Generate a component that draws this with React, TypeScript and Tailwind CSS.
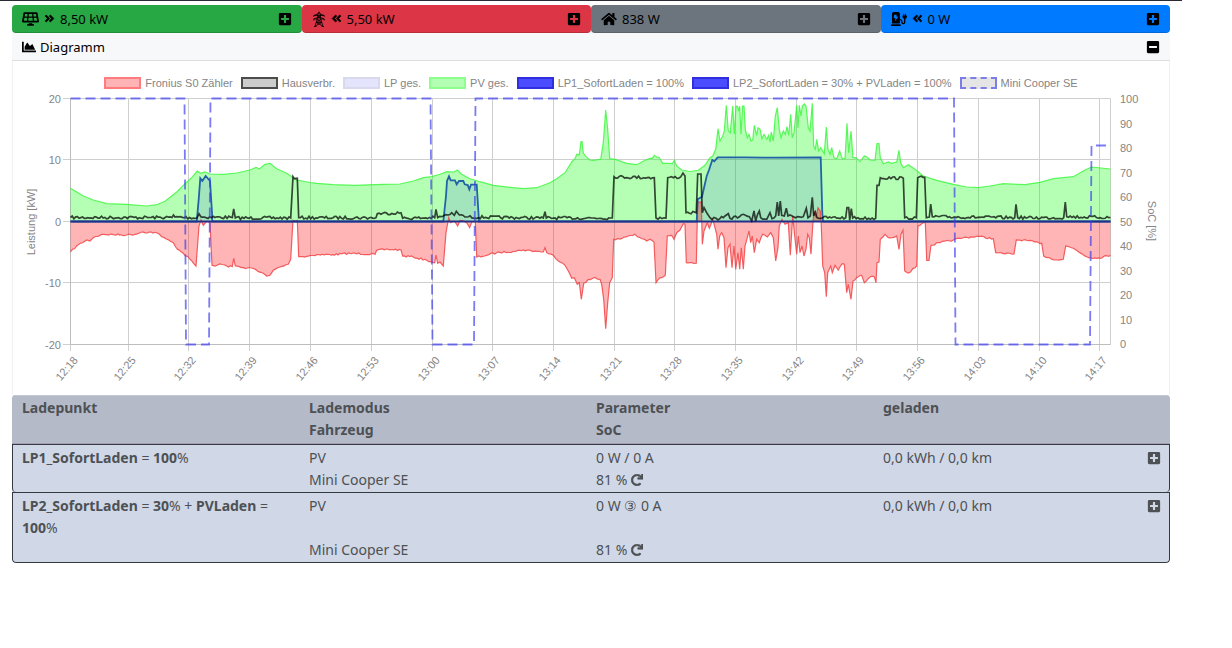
import type { ReactNode } from "react";
import {
  FaAngleDoubleLeft,
  FaAngleDoubleRight,
  FaChargingStation,
  FaChartArea,
  FaHome,
  FaMinusSquare,
  FaPlusSquare,
  FaRedo,
  FaSolarPanel,
} from "react-icons/fa";

type Point = [number, number];

const ZERO = 221.5;

const timeTicks: [number, string][] = [
  [70.5, "12:18"], [128.5, "12:25"], [188.5, "12:32"], [249.5, "12:39"], [310.5, "12:46"], [371.5, "12:53"],
  [432.5, "13:00"], [492.5, "13:07"], [553.5, "13:14"], [614.5, "13:21"], [674.5, "13:28"], [735.5, "13:35"],
  [796.5, "13:42"], [856.5, "13:49"], [917.5, "13:56"], [978.5, "14:03"], [1039.5, "14:10"], [1099.5, "14:17"],
];

const powerTicks: [number, string][] = [
  [98.5, "20"], [159.5, "10"], [221.5, "0"], [282.5, "-10"], [344.5, "-20"],
];

const socTicks = [100, 90, 80, 70, 60, 50, 40, 30, 20, 10, 0];

const pv: Point[] = [
  [70.5, 188.3], [83.3, 196], [93.3, 200], [106.7, 203.7], [126.7, 204.3], [146.7, 206], [156.7, 204.7], [165, 201.3],
  [176.7, 192], [185, 183.7], [191.7, 177.7], [197.3, 171], [200.7, 173.3], [205, 172], [210, 174], [223.3, 174.3],
  [236.7, 173], [250, 170], [256, 167.3], [259.3, 169], [265, 164.3], [270, 163.3], [276.7, 168.7], [286.7, 173.3],
  [296.7, 180], [310, 182.5], [316.7, 183.3], [333.3, 184.7], [355, 185.3], [383.3, 184.3], [400, 184], [413.3, 181],
  [423.3, 177.7], [431.7, 176.7], [440, 174.3], [446.7, 171.7], [454, 172], [457.3, 170], [461.7, 174.3], [470, 178.7],
  [480, 181.7], [493.3, 185.3], [510, 187.3], [523.3, 188.7], [536.7, 187.7], [550, 182.7], [556.7, 178.7], [565, 172.7],
  [571.7, 162], [575, 158.7], [576.7, 154.3], [579.3, 154.7], [581, 141.7], [582, 141.7], [583.3, 153], [586, 156.7],
  [590, 160], [593, 160.3], [600.7, 159.3], [603.3, 142.7], [605.7, 110], [607.7, 129.3], [609.7, 158.7], [615, 159.3],
  [626.7, 163.3], [636.7, 164.7], [645, 160.3], [650, 158.3], [652.3, 158.3], [654.3, 155.3], [656.7, 157], [659, 157.3],
  [662.7, 163.3], [668.3, 163.3], [672.3, 163.7], [674.3, 160.3], [676.7, 166], [681.7, 170], [690, 171.5], [698.3, 170.3],
  [705, 165.3], [710, 157.7], [712.7, 156], [715.7, 149.3], [718, 128.7], [720, 141], [722.7, 136], [724.3, 131],
  [726.3, 105.3], [728.3, 131], [730.3, 132.7], [732.7, 106], [734.3, 134.3], [736, 106], [737.5, 106.5], [738.7, 111],
  [739.7, 106], [741, 134.3], [742.6, 106], [744, 106], [745.3, 129.3], [747.3, 137.7], [749, 134.3], [751, 141],
  [752.7, 140], [754.3, 125.3], [756.7, 135.3], [758, 127.7], [760, 129], [762, 138.7], [764, 134.3], [766.7, 139.3],
  [768.7, 135.3], [770, 142], [771.3, 132], [773.3, 141], [775.3, 116], [777.3, 107.7], [779.3, 129.3], [781, 137.7],
  [783.3, 131], [785.3, 134.3], [787, 126.7], [788.7, 135.3], [790.7, 114.3], [792.3, 137.7], [794, 132.7],
  [796.7, 105.3], [798, 127.7], [799.3, 105.3], [801, 116], [802.3, 106], [804.3, 104], [806, 106], [808.3, 127.7],
  [810, 131], [812.3, 103.3], [813.7, 146], [815.3, 149.3], [816.7, 139.3], [818.7, 151], [820.7, 147.7], [824.3, 153.7],
  [826.3, 127], [828, 149.3], [830, 154.3], [831.7, 147.7], [834, 157.7], [836.7, 158.7], [839.7, 151], [842.3, 158.7],
  [845, 158.7], [847, 123.3], [848.7, 152.7], [851, 131], [853, 157.7], [856, 157.7], [860, 161.7], [864.3, 156],
  [866.7, 156.7], [870, 160], [875, 160.3], [877, 143.7], [879, 143.7], [880.3, 157.7], [883.3, 163.7], [888.3, 162],
  [891.7, 163.3], [896.7, 162], [899, 150.3], [900.7, 162.7], [903.3, 167.7], [908.3, 164.7], [915, 169.3],
  [923.3, 176], [936.7, 180.3], [953.3, 184.3], [966.7, 187], [978.3, 187.7], [990, 186], [1003.3, 183.7],
  [1025, 184.7], [1040, 182.3], [1053.3, 178.7], [1073.3, 176.7], [1085, 170], [1091.7, 167], [1110.5, 169],
];

const grid: Point[] = [
  [70.5, 252], [76.7, 246], [86.7, 240], [90, 241], [93.3, 237.7], [101.7, 234.3], [126.7, 235], [135, 234.3],
  [141.7, 232], [156.7, 232.7], [161.7, 236.7], [170, 241], [173.3, 242.7], [175.7, 247], [183.3, 253.3], [190, 259.3],
  [196, 266], [199, 226], [201, 220], [203.3, 225.3], [206.7, 221.3], [210, 222.7], [212, 265.3], [215, 266], [220, 264],
  [226.7, 266], [232.3, 266.7], [233.7, 258.3], [235.3, 266], [243.3, 267.7], [253.3, 268.3], [258.3, 271.7],
  [263.3, 273.3], [266.7, 276], [270, 275.3], [273.3, 270.3], [280, 267], [288.3, 264.3], [290.7, 259.3], [293, 220.3],
  [297.3, 220.3], [298.7, 256.7], [303, 256.7], [316.7, 254.7], [333, 254.7], [350, 253.3], [375, 254.3], [376.7, 250.3],
  [388.3, 249.3], [401, 250], [402.7, 256], [413.3, 257], [426.7, 260.3], [434.7, 262.7], [436, 255], [437.7, 263.3],
  [440, 262], [443.3, 266], [446, 232.7], [448.7, 217.7], [450.7, 222.7], [454, 221], [457.7, 226], [460, 220.3],
  [466.7, 222.7], [469.7, 227.7], [471.7, 222], [475.3, 221.3], [476.7, 257], [486.7, 255.3], [496.7, 252.7],
  [513.3, 251.3], [523.3, 250], [536.7, 251.3], [543.3, 252], [545, 247.7], [546.7, 252.7], [553.3, 255.3],
  [558.3, 261], [565, 265.3], [568.3, 271], [571.7, 278.3], [574.3, 277.7], [577.3, 284.3], [579.3, 282.7],
  [581.3, 299.3], [583.7, 283.3], [588.3, 279.3], [595, 277.5], [600, 279.3], [601.7, 284.3], [603.7, 299.3],
  [605.7, 328.7], [607.7, 302.7], [609.7, 282.7], [612.3, 277.7], [613.7, 239.3], [621.7, 238.7], [628.3, 236],
  [635, 234.3], [640, 237.7], [646.7, 241], [650, 239.3], [654, 242], [656, 282.7], [658.3, 279.3], [661.7, 277.7],
  [665.3, 275.3], [667.3, 236], [671.7, 235.3], [674, 239.3], [676.7, 232.7], [680, 230], [683.3, 223.7], [685, 224.3],
  [686.3, 262.7], [691.7, 262.7], [696.3, 263.3], [697.7, 202.7], [701.3, 202], [702.3, 244.3], [704, 231],
  [707.3, 222.7], [709.3, 228.3], [712.7, 219.3], [715, 227.7], [716.7, 234.3], [718, 249.3], [719.7, 236],
  [721.7, 232.7], [724, 237.7], [726, 267.7], [728, 247.7], [730, 244.3], [732, 267.7], [734, 246], [735.7, 269.3],
  [738, 252.7], [739.7, 269.3], [741.3, 247.7], [743.3, 269.3], [745, 246], [747.3, 237.7], [749, 231], [750.7, 242.7],
  [752.3, 236], [754.3, 252.7], [756.7, 239.3], [759.3, 242.7], [762.7, 234.3], [767.3, 237], [770.7, 232.7],
  [773.3, 237.7], [775.7, 261], [778, 247.7], [779.3, 226], [782, 219.3], [785, 224.3], [788.3, 222.7], [790.3, 255.3],
  [792.7, 216], [794.7, 236], [796.7, 254.3], [798.3, 236], [800, 252.7], [802, 246], [804, 256], [806, 249.3],
  [807.7, 234.3], [809.3, 237.7], [811, 254.3], [812.7, 226], [814, 211], [816, 217.7], [818, 207.7], [820.3, 211],
  [821.3, 226], [822.7, 266], [824.7, 272.7], [826.3, 296.7], [827.7, 272.7], [830.7, 266], [832.3, 272.7], [835, 265.3],
  [838.3, 270], [842.3, 263.7], [844.3, 264.3], [846.7, 292.7], [848.3, 284.3], [851, 299.3], [853, 281],
  [858.3, 276.7], [861.7, 275.3], [864.3, 282.7], [870, 277], [874.3, 276.7], [876, 282.7], [877, 262.7], [879, 262],
  [880.3, 239.3], [885, 234.3], [888.3, 237.7], [896.7, 236], [899, 249.3], [901, 234.3], [903, 230.3], [904.7, 271],
  [908.3, 273], [915, 267.7], [916.7, 266], [918, 226], [923.3, 222.7], [925.3, 222.7], [926.7, 260.3], [929, 260.3],
  [931, 245.3], [940, 242.7], [953.3, 240], [963.3, 237.7], [978.3, 236.3], [993.3, 238.7], [995.7, 252.7],
  [1003.3, 253.7], [1014, 254], [1016.3, 240], [1023.3, 240], [1041.7, 243.3], [1043.7, 256], [1056.7, 260],
  [1063.3, 259.3], [1065.7, 246], [1073.3, 248.3], [1086.7, 256.7], [1096.7, 258.3], [1110.5, 255.3],
];

const house: Point[] = [
  [70.5, 217.5], [172, 217.5], [173.5, 215], [175, 217], [197, 218], [199, 213.7], [201, 217], [232.3, 217.5],
  [233.7, 209], [235.3, 218], [290.7, 218], [293, 176.7], [294.3, 178.7], [297.3, 178.3], [298.7, 217.7], [376, 217.7],
  [377.3, 213.7], [401, 212.7], [402.7, 218.3], [434.7, 217.7], [436, 209.3], [437.7, 217.7], [443.3, 216], [448, 215],
  [451.7, 212.7], [454.3, 215.3], [456.3, 211.3], [459.3, 215], [466.7, 217], [543.3, 218], [545, 211.7], [546.3, 218],
  [612.3, 218], [614, 176.7], [654.3, 177.7], [656, 218], [666, 218], [667.7, 177.7], [680.7, 177], [683, 173],
  [685, 176], [686, 212.7], [696.3, 212.7], [697.7, 174], [701, 174], [702.3, 212.7], [704, 207.7], [706.7, 212.7],
  [710, 217.7], [718, 220], [725, 216], [728.3, 213.7], [730, 218.3], [745, 215], [749.3, 216.7], [751.7, 221],
  [754, 211], [755.7, 221], [759.3, 211], [760.7, 217.7], [766.7, 219.3], [770, 212.7], [772, 218.7], [775.7, 216],
  [777.3, 202], [778.7, 216], [780.3, 201], [781.7, 215.3], [784.3, 216], [786.3, 208.3], [788, 216], [803.3, 216.7],
  [806.3, 208.3], [808, 217.7], [810.3, 216], [812.3, 197.3], [813.7, 216], [815.3, 212], [817, 217.7], [845.7, 217.7],
  [847, 207.7], [848.7, 207.7], [849.7, 220.3], [851.3, 208.7], [852.7, 218], [875.7, 218.3], [877, 185.3],
  [879, 185.3], [880.3, 177.7], [903.3, 178.3], [904.7, 217.7], [916.3, 217.7], [917.7, 177.7], [924.7, 177.3],
  [926.3, 217.7], [929.3, 217], [930.7, 204], [932.3, 216.7], [1014.7, 217.7], [1016, 204.3], [1017.7, 217.7],
  [1063.7, 217.7], [1065.3, 202], [1066.7, 216.7], [1110.5, 217.5],
];

const charging: Point[] = [
  [70.5, ZERO], [196.7, ZERO], [198.7, 199.3], [200.3, 178.3], [202.3, 181], [205.7, 176], [210, 181], [212, 212.7],
  [212.3, ZERO], [443.3, ZERO], [446, 196], [447, 181], [449, 176.3], [450.7, 180.3], [455, 180.3], [456.7, 184.3],
  [459, 181], [463.3, 181], [464.7, 184.3], [467.7, 185], [469.3, 189.3], [471, 184.7], [476.7, 184.7], [479, ZERO],
  [696.7, ZERO], [697.7, 199.3], [702, 196.7], [706.7, 176], [709, 170], [712.3, 160], [714.3, 161.3], [717.7, 157.3],
  [745, 157.3], [773.3, 157.7], [820.7, 157.3], [822.3, 212.7], [823, ZERO], [1110.5, ZERO],
];

const soc: Point[] = [
  [70.5, 98.5], [184.5, 98.5], [186, 344.5], [209, 344.5], [210.5, 98.5], [430.5, 98.5], [432.5, 344.5], [474, 344.5],
  [475.5, 98.5], [954, 98.5], [955.5, 344.5], [1090, 344.5], [1091.5, 145.5], [1110.5, 145.5],
];

// Meter jitter: long flat stretches get small steps, steep edges stay clean.
function jitter(points: Point[], amp: number): Point[] {
  const out: Point[] = [points[0]];
  let seed = 7;
  for (let i = 1; i < points.length; i++) {
    const [x0, y0] = points[i - 1];
    const [x1, y1] = points[i];
    const steps = Math.floor((x1 - x0) / 1.7);
    for (let s = 1; s < steps; s++) {
      seed = (seed * 16807) % 2147483647;
      const noise = (seed / 2147483647 - 0.5) * 2 * amp;
      out.push([x0 + ((x1 - x0) * s) / steps, y0 + ((y1 - y0) * s) / steps + noise]);
    }
    out.push([x1, y1]);
  }
  return out;
}

function line(points: Point[]) {
  return "M" + points.map(([x, y]) => `${x.toFixed(1)} ${y.toFixed(1)}`).join("L");
}

function area(points: Point[]) {
  return `${line(points)}L1110.5 ${ZERO}L70.5 ${ZERO}Z`;
}

const gridNoisy = jitter(grid, 0.9);
const houseNoisy = jitter(house, 1.5);

const legend = [
  { label: "Fronius S0 Zähler", box: "border-[#ff7b7d] bg-[#ffb3b4]" },
  { label: "Hausverbr.", box: "border-[#4c4c4c] bg-[#cccccc]" },
  { label: "LP ges.", box: "border-[#d9d9ee] bg-[#e4e4fd]" },
  { label: "PV ges.", box: "border-[#8dff8d] bg-[#b3ffb3]" },
  { label: "LP1_SofortLaden = 100%", box: "border-[#2f2fe0] bg-[#4c4cff]" },
  { label: "LP2_SofortLaden = 30% + PVLaden = 100%", box: "border-[#2f2fe0] bg-[#4c4cff]" },
  { label: "Mini Cooper SE", box: "border-dashed border-[#7d7de8] bg-[#e5e5e5]" },
];

function Chart() {
  return (
    <div className="border-x border-[#f1f1f4] bg-white pt-4">
      <ul className="flex flex-wrap justify-center gap-x-2 pb-[3px] font-['Liberation_Sans',Arial,sans-serif] text-[11px] leading-3 text-[#858585]">
        {legend.map((item) => (
          <li key={item.label} className="flex items-center gap-1">
            <span className={`h-3 w-[37px] border-2 ${item.box}`} />
            {item.label}
          </li>
        ))}
      </ul>
      <svg
        viewBox="13 92 1156 303"
        className="block h-auto w-full font-['Liberation_Sans',Arial,sans-serif] text-[11px]"
        role="img"
        aria-label="Leistung und SoC"
      >
        <g stroke="#cfcfcf" fill="none">
          {powerTicks.map(([y, label]) => (
            <path key={label} d={`M63 ${y}H1110.5`} />
          ))}
          {timeTicks.map(([x, label]) => (
            <path key={label} d={`M${x} 98.5V351`} />
          ))}
          <path d="M1110.5 98.5V344.5" />
        </g>
        <path d="M70.5 98.5V344.5H1110.5" stroke="#bdbdbd" fill="none" />

        <path d={area(pv)} fill="#0aff0a" fillOpacity="0.3" />
        <path d={line(pv)} fill="none" stroke="#2cf52c" strokeOpacity="0.75" strokeWidth="1.2" />
        <path d={area(charging)} fill="#0000ff" fillOpacity="0.1" />
        <path d={area(gridNoisy)} fill="#ff0a0d" fillOpacity="0.3" />
        <path d={line(gridNoisy)} fill="none" stroke="#f03c3e" strokeOpacity="0.8" strokeWidth="1.2" />
        <path d={line(charging)} fill="none" stroke="#2364a6" strokeWidth="1.8" />
        <path d={`M70.5 ${ZERO}H1110.5`} stroke="#22308c" strokeWidth="2" />
        <path d={line(houseNoisy)} fill="none" stroke="#000" strokeOpacity="0.72" strokeWidth="1.7" />
        <path d={line(soc)} fill="none" stroke="#3c3cf0" strokeOpacity="0.68" strokeWidth="1.8" strokeDasharray="10 5" />

        <g fill="#858585">
          {powerTicks.map(([y, label]) => (
            <text key={label} x="61" y={y + 4} textAnchor="end">{label}</text>
          ))}
          {socTicks.map((value) => (
            <text key={value} x="1120" y={348 - value * 2.45}>{value}</text>
          ))}
          {timeTicks.map(([x, label]) => (
            <text key={label} transform={`translate(${x - 1} 371) rotate(-50)`} textAnchor="middle">{label}</text>
          ))}
          <text transform="translate(35 222) rotate(-90)" textAnchor="middle">Leistung [kW]</text>
          <text transform="translate(1148 221) rotate(90)" textAnchor="middle">SoC [%]</text>
        </g>
      </svg>
    </div>
  );
}

function PylonIcon() {
  return (
    <svg viewBox="0 0 14 16" className="h-4 w-3.5" fill="none" stroke="currentColor" strokeWidth="0.8" aria-hidden="true">
      <path d="M5.500 3.500 7 .8 8.500 3.500V7L11 15.500M5.500 3.500V7L3 15.500M1.800 5.800V4.500L5.500 3H8.500L12.200 4.500V5.800M1.800 9.500V8L5.500 6.500H8.500L12.200 8V9.500M1.800 4.500H12.200M1.800 8H12.200M5.500 4.500 8.500 7M8.500 4.500 5.500 7M5 8.500 9.800 11.500M9 8.500 4.200 11.500M4.200 11.500H9.800M4.200 11.500 10.800 15M9.800 11.500 3.200 15M2 15.500H4.500M9.500 15.500H12" />
    </svg>
  );
}

function StatusTile({ color, label, children }: { color: string; label: string; children: ReactNode }) {
  return (
    <div className={`flex h-7 items-center justify-between rounded border-b border-black/15 px-2.5 ${color}`}>
      <span className="flex items-center gap-[5px]">{children}</span>
      <button type="button" aria-label={`${label} aufklappen`}>
        <FaPlusSquare size={14} />
      </button>
    </div>
  );
}

// Only letters and digits are bold in a charge point's name.
function LpName({ name }: { name: string }) {
  return (
    <>
      {name.split(/([=+%])/).map((part, i) =>
        /[=+%]/.test(part) ? <span key={i} className="font-normal">{part}</span> : part
      )}
    </>
  );
}

const chargePoints = [
  { name: "LP1_SofortLaden = 100%", mode: "PV", car: "Mini Cooper SE", power: "0 W / 0 A", soc: "81 %", charged: "0,0 kWh / 0,0 km" },
  { name: "LP2_SofortLaden = 30% + PVLaden = 100%", mode: "PV", car: "Mini Cooper SE", power: "0 W ③ 0 A", soc: "81 %", charged: "0,0 kWh / 0,0 km" },
];

function ChargePointTable() {
  return (
    <div className="overflow-hidden rounded bg-[#d0d7e6] text-[#4d5154]">
      <table className="w-full table-fixed border-separate border-spacing-0 text-left text-sm leading-[22px]">
        <thead className="bg-[#b5bac9]">
          <tr className="align-top">
            <th scope="col" className="border-t border-[#c3c7d2] pl-2.5 pt-px">Ladepunkt</th>
            <th scope="col" className="border-t border-[#c3c7d2] pl-2.5 pt-px">Lademodus</th>
            <th scope="col" className="border-t border-[#c3c7d2] pl-2.5 pt-px">Parameter</th>
            <th scope="col" className="border-t border-[#c3c7d2] pl-2.5 pt-px">geladen</th>
            <td className="w-2.5 border-t border-[#c3c7d2]" />
          </tr>
          <tr className="align-top">
            <td className="border-b border-[#a59db5] pb-0.5" />
            <th scope="col" className="border-b border-[#a59db5] pb-0.5 pl-2.5">Fahrzeug</th>
            <th scope="col" className="border-b border-[#a59db5] pb-0.5 pl-2.5">SoC</th>
            <td className="border-b border-[#a59db5] pb-0.5" />
            <td className="border-b border-[#a59db5] pb-0.5" />
          </tr>
        </thead>
        {chargePoints.map((lp) => (
          <tbody key={lp.name} className="group">
            <tr className="align-top">
              <th scope="row" className="border-l border-t border-[#343a40] pl-[9px] pt-0.5"><LpName name={lp.name} /></th>
              <td className="border-t border-[#343a40] pl-2.5 pt-0.5">{lp.mode}</td>
              <td className="border-t border-[#343a40] pl-2.5 pt-0.5">{lp.power}</td>
              <td className="border-r border-t border-[#343a40] pl-2.5 pt-0.5" colSpan={2}>
                <div className="flex items-center justify-between pr-2">
                  {lp.charged}
                  <button type="button" aria-label={`${lp.name} aufklappen`}>
                    <FaPlusSquare size={14} />
                  </button>
                </div>
              </td>
            </tr>
            <tr className="align-top">
              <td className="rounded-bl border-l border-[#343a40] pb-px group-last:border-b" />
              <td className="border-[#343a40] pb-px pl-2.5 group-last:border-b">{lp.car}</td>
              <td className="border-[#343a40] pb-px pl-2.5 group-last:border-b">
                <div className="flex items-center gap-1">
                  {lp.soc}
                  <button type="button" aria-label="SoC aktualisieren">
                    <FaRedo size={12} stroke="currentColor" strokeWidth={24} />
                  </button>
                </div>
              </td>
              <td className="rounded-br border-r border-[#343a40] pb-px group-last:border-b" colSpan={2} />
            </tr>
          </tbody>
        ))}
      </table>
    </div>
  );
}

export default function App() {
  return (
    <div className="min-h-screen bg-white font-['Noto_Sans',sans-serif] text-[13px] leading-[22px] text-black">
      <main className="mr-[50px] border-t border-[#2b2b33] px-3 pt-1">
        <section className="grid grid-cols-4">
          <StatusTile color="bg-[#28a745]" label="PV">
            <FaSolarPanel className="h-3.5 w-[17px]" />
            <FaAngleDoubleRight size={11} stroke="currentColor" strokeWidth={28} />
            8,50 kW
          </StatusTile>
          <StatusTile color="bg-[#dc3545]" label="EVU">
            <PylonIcon />
            <FaAngleDoubleLeft size={11} stroke="currentColor" strokeWidth={28} />
            5,50 kW
          </StatusTile>
          <StatusTile color="bg-[#6c757d]" label="Hausverbrauch">
            <FaHome className="h-3.5 w-4" />
            838 W
          </StatusTile>
          <StatusTile color="bg-[#007bff]" label="Ladepunkte">
            <FaChargingStation className="h-3.5 w-4" />
            <FaAngleDoubleLeft size={11} stroke="currentColor" strokeWidth={28} />
            0 W
          </StatusTile>
        </section>

        <section>
          <div className="flex h-7 items-center justify-between border-b border-[#dcdde0] bg-[#f7f8fa] px-2.5">
            <h2 className="flex items-center gap-1">
              <FaChartArea size={14} />
              Diagramm
            </h2>
            <button type="button" aria-label="Diagramm zuklappen">
              <FaMinusSquare size={14} />
            </button>
          </div>
          <Chart />
        </section>

        <ChargePointTable />
      </main>
    </div>
  );
}
